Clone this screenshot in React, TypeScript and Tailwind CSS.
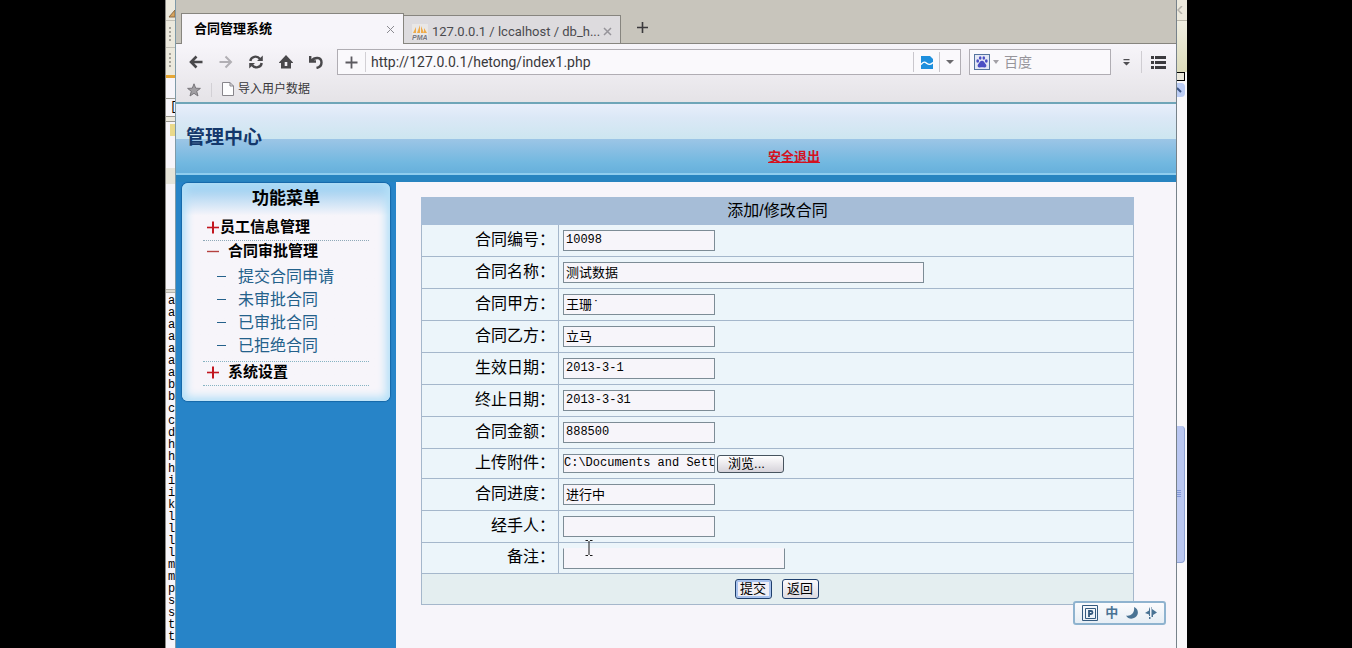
import { useState, type ReactNode } from 'react';

const letters = 'aaaaaaabbccdhhhiikllllmmpsstt'.split('');

interface Field {
  id: string;
  label: string;
  value: string;
  wide?: boolean;
}

const topFields: Field[] = [
  { id: 'number', label: '合同编号', value: '10098' },
  { id: 'name', label: '合同名称', value: '测试数据', wide: true },
  { id: 'partyA', label: '合同甲方', value: '王珊˙' },
  { id: 'partyB', label: '合同乙方', value: '立马' },
  { id: 'start', label: '生效日期', value: '2013-3-1' },
  { id: 'end', label: '终止日期', value: '2013-3-31' },
  { id: 'amount', label: '合同金额', value: '888500' },
];

const bottomFields: Field[] = [
  { id: 'progress', label: '合同进度', value: '进行中' },
  { id: 'handler', label: '经手人', value: '' },
];

const subMenu = ['提交合同申请', '未审批合同', '已审批合同', '已拒绝合同'];

const inputBase =
  "block h-[21px] border border-[#7d8c96] bg-[#f7f5fa] px-[2px] pb-[2px] font-['Liberation_Mono','Noto_Sans_CJK_SC',monospace] text-black outline-none";

function Row({ id, label, height, children }: { id: string; label: string; height: string; children: ReactNode }) {
  return (
    <tr className={height}>
      <th scope="row" className="border border-[#a5b7cb] p-0 pr-[3px] pb-[2px] text-right text-base leading-5 font-normal">
        <label htmlFor={id}>{label}：</label>
      </th>
      <td className="border border-[#a5b7cb] p-0 pl-1">{children}</td>
    </tr>
  );
}

function FieldRow({ field }: { field: Field }) {
  const [value, setValue] = useState(field.value);
  const size = /^[\d-]+$/.test(field.value) ? 'text-[12px]' : 'text-[13px]';
  return (
    <Row id={field.id} label={field.label} height="h-8">
      <input
        id={field.id}
        value={value}
        onChange={(e) => setValue(e.target.value)}
        className={`${inputBase} ${size} ${field.wide ? 'w-[361px]' : 'w-[152px]'}`}
      />
    </Row>
  );
}

function PlusMinus({ open }: { open?: boolean }) {
  return (
    <svg viewBox="0 0 13 13" className="h-[13px] w-[13px] shrink-0" stroke={open ? '#b5413f' : '#c2161f'} fill="none">
      <path d="M0 6.5H12" strokeWidth={open ? 1.4 : 1.6} />
      {!open && <path d="M6 0.5V12.5" strokeWidth="2" />}
    </svg>
  );
}

function ContractForm() {
  const [note, setNote] = useState('');
  return (
    <form className="relative" onSubmit={(e) => e.preventDefault()}>
      <table className="w-full table-fixed border-collapse bg-[#ecf5fa] text-black">
        <colgroup>
          <col className="w-[137px]" />
          <col />
        </colgroup>
        <thead>
          <tr className="h-[27px] bg-[#a6bdd7]">
            <th colSpan={2} className="border border-[#a6bdd7] p-0 text-base leading-5 font-normal">
              添加/修改合同
            </th>
          </tr>
        </thead>
        <tbody>
          {topFields.map((f) => (
            <FieldRow key={f.id} field={f} />
          ))}
          <Row id="file" label="上传附件" height="h-[30px]">
            <div className="flex items-center gap-[2px]">
              <input
                id="file"
                readOnly
                value="C:\Documents and Sett"
                className="block h-[19px] w-[152px] border border-[#7d8c96] bg-[#f7f5fa] pb-[2px] font-['Liberation_Mono',monospace] text-[12px] text-black outline-none"
              />
              <button
                type="button"
                className="h-[18px] w-[67px] rounded-[3px] border border-[#47545f] bg-linear-to-b from-white to-[#d6d3da] pr-2 text-[13px] leading-[13px]"
              >
                浏览...
              </button>
            </div>
          </Row>
          {bottomFields.map((f) => (
            <FieldRow key={f.id} field={f} />
          ))}
          <Row id="note" label="备注" height="h-[31px]">
            <input
              id="note"
              value={note}
              onChange={(e) => setNote(e.target.value)}
              className={`${inputBase} w-[222px] border-t-transparent text-[13px]`}
            />
          </Row>
          <tr className="h-[31px] bg-[#e4eef0]">
            <td colSpan={2} className="border border-[#a5b7cb] p-0 pr-[2px]">
              <div className="flex justify-center gap-[10px]">
                <button
                  type="submit"
                  className="h-5 w-[37px] rounded-[3px] border border-[#1f3f6d] bg-[#f1eff5] text-[13px] leading-4 inset-ring-2 inset-ring-[#a9c3ee]"
                >
                  提交
                </button>
                <button
                  type="button"
                  className="h-5 w-[37px] rounded-[3px] border border-[#1f3f6d] bg-linear-to-b from-[#fbfafc] to-[#dddbe2] text-[13px] leading-4"
                >
                  返回
                </button>
              </div>
            </td>
          </tr>
        </tbody>
      </table>
      {/* text cursor */}
      <svg viewBox="0 0 8 16" className="absolute top-[343px] left-[164px] h-4 w-2" fill="none" stroke="#1b1b1b">
        <path d="M0.5 0.5H3M5 0.5H7.5M4 1V15M0.5 15.5H3M5 15.5H7.5" />
      </svg>
    </form>
  );
}

function Sidebar() {
  return (
    <aside className="w-[220px] shrink-0 bg-[#2784c8] pt-px pl-[6px]">
      <nav className="w-[208px] rounded-md bg-linear-to-b from-[#8ec8ee] via-[#f7f5fa] via-15% to-[#f7f5fa] px-[21px] pb-[15px] shadow-[0_0_1px_1px_#1668a8] inset-shadow-[0_0_8px_4px_#b4e0f8]">
        <h2 className="h-8 text-center text-[17px] leading-8 font-bold">功能菜单</h2>
        <div className="flex h-[26px] items-center border-b border-dotted border-[#8fa9b8] pl-1 text-[15px] font-bold">
          <PlusMinus />
          员工信息管理
        </div>
        <div className="flex h-[21px] items-center gap-2 pl-1 text-[15px] font-bold">
          <PlusMinus open />
          合同审批管理
        </div>
        <ul className="border-b border-dotted border-[#86b3c2] pt-[3px] pb-1">
          {subMenu.map((item) => (
            <li key={item} className="flex h-[23px] items-center gap-3 pl-[14px] text-base text-[#24618b]">
              <span className="h-px w-[9px] bg-[#24618b]" />
              <a href="#">{item}</a>
            </li>
          ))}
        </ul>
        <div className="flex h-6 items-center gap-2 border-b border-dotted border-[#86b3c2] pb-[2px] pl-1 text-[15px] font-bold">
          <PlusMinus />
          系统设置
        </div>
      </nav>
    </aside>
  );
}

function TabBar() {
  return (
    <div className="flex h-11 items-end bg-[#c8c5bc]">
      <div className="h-full w-[5px] border-b border-[#87857f]" />
      <div className="flex h-[31px] w-[223px] items-center justify-between border border-b-0 border-[#87857f] bg-[#f7f5fa] pr-2 pl-3">
        <span className="text-[13px] font-bold text-black">合同管理系统</span>
        <button type="button" aria-label="关闭">
          <svg viewBox="0 0 9 9" className="h-[9px] w-[9px]" stroke="#8b8a90" fill="none">
            <path d="M1 1L8 8M8 1L1 8" />
          </svg>
        </button>
      </div>
      <div className="flex h-[29px] w-[217px] items-center border border-l-0 border-[#87857f] bg-[#dddbde] pt-1 pr-2 pl-2 text-[#4a4a4e]">
        <svg viewBox="0 0 16 16" className="mr-1 h-4 w-4 shrink-0">
          <rect width="16" height="16" fill="#e9e7e6" />
          <path d="M1 9L4 3V9ZM5 9L8 1V9ZM9 9L9 2L12 9ZM12 9L12 4L15 9Z" fill="#efab49" />
          <text x="0" y="16" fontSize="7" fontStyle="italic" fontWeight="bold" fill="#777681" fontFamily="Liberation Sans">
            PMA
          </text>
        </svg>
        <span className="flex-1 font-['Roboto',sans-serif] text-[13px] whitespace-nowrap">
          127.0.0.1 / lccalhost / db_h...
        </span>
        <button type="button" aria-label="关闭">
          <svg viewBox="0 0 9 9" className="h-[9px] w-[9px]" stroke="#96949a" strokeWidth="1.5" fill="none">
            <path d="M1 1L8 8M8 1L1 8" />
          </svg>
        </button>
      </div>
      <div className="flex h-full flex-1 items-center border-b border-[#87857f] pt-3 pl-4">
        <button type="button" aria-label="新建标签">
          <svg viewBox="0 0 11 11" className="h-[11px] w-[11px]" stroke="#3b3a3c" strokeWidth="1.6" fill="none">
            <path d="M5.5 0V11M0 5.5H11" />
          </svg>
        </button>
      </div>
    </div>
  );
}

function Toolbar() {
  return (
    <div className="flex h-9 items-center pr-[10px] pl-[13px]">
      <div className="flex w-[148px] items-center gap-4">
        <button type="button" aria-label="后退">
          <svg viewBox="0 0 14 14" className="h-[14px] w-[14px]" fill="none" stroke="#49484b" strokeWidth="2.6">
            <path d="M7.5 1.5L2 7L7.5 12.5M2 7H13.5" />
          </svg>
        </button>
        <button type="button" aria-label="前进">
          <svg viewBox="0 0 14 14" className="h-[14px] w-[14px]" fill="none" stroke="#b1afb4" strokeWidth="2">
            <path d="M6.5 1.5L12 7L6.5 12.5M12 7H0.5" />
          </svg>
        </button>
        <button type="button" aria-label="刷新">
          <svg viewBox="0 0 14 14" className="h-[14px] w-[14px]" fill="none" stroke="#49484b" strokeWidth="2.4">
            <path d="M1.3 6C2 1.5 8 0 11 4M12.7 8C12 12.5 6 14 3 10" />
            <path d="M13.8 0.5V6H8ZM0.2 13.5V8H6Z" fill="#49484b" stroke="none" />
          </svg>
        </button>
        <button type="button" aria-label="主页">
          <svg viewBox="0 0 14 14" className="h-[14px] w-[14px]" fill="#49484b">
            <path d="M7 0L14.5 8H12V13.5H2V8H-0.5L7 0ZM5.7 7V11H8.3V7Z" fillRule="evenodd" />
          </svg>
        </button>
        <button type="button" aria-label="恢复">
          <svg viewBox="0 0 14 14" className="h-[14px] w-[14px]" fill="none" stroke="#49484b" strokeWidth="2.4">
            <path d="M1.2 1V6.5H7M2 6C6 1.5 12.5 2 12.5 7.5C12.5 11 10 12.5 7.5 13" />
          </svg>
        </button>
      </div>
      <div className="flex h-[26px] flex-1 items-center border border-[#b0adb3] bg-[#faf9fc]">
        <svg viewBox="0 0 13 13" className="mx-[7px] h-[13px] w-[13px]" stroke="#5c5b60" strokeWidth="1.8">
          <path d="M6.5 0.5V12.5M0.5 6.5H12.5" />
        </svg>
        <input
          aria-label="地址"
          defaultValue="http://127.0.0.1/hetong/index1.php"
          className="h-5 min-w-0 flex-1 border-l border-[#d2d0d5] bg-transparent pl-[5px] font-['Roboto',sans-serif] text-[14px] text-[#39383b] outline-none"
        />
        <div className="flex h-5 w-[27px] items-center justify-center border-x border-[#c9c7cd]">
          <svg viewBox="0 0 12 13" className="h-[13px] w-3">
            <path d="M0 0H9L12 3V13H0Z" fill="#1d8fdd" />
            <path d="M0 8.5C3 5 4 6 6 7.5S9.5 9 12 6.5" stroke="#fff" strokeWidth="1.4" fill="none" />
          </svg>
        </div>
        <svg viewBox="0 0 8 4" className="mx-[6px] h-1 w-2" fill="#6b6a6e">
          <path d="M0 0H8L4 4Z" />
        </svg>
      </div>
      <div className="ml-2 flex h-[26px] w-[142px] items-center border border-[#b0adb3] bg-[#faf9fc] pl-1">
        <svg viewBox="0 0 16 16" className="h-4 w-4 shrink-0" fill="#4b4fc4">
          <rect x="0.5" y="0.5" width="15" height="15" fill="#e4e8f5" stroke="#54739e" />
          <ellipse cx="3.7" cy="7" rx="1.4" ry="1.8" />
          <ellipse cx="6.2" cy="4" rx="1.3" ry="1.8" />
          <ellipse cx="9.8" cy="4" rx="1.3" ry="1.8" />
          <ellipse cx="12.3" cy="7" rx="1.4" ry="1.8" />
          <path d="M8 6.8C10 6.8 10.5 9 12 10.5C13 12 12 13.8 10.2 13.5C8.5 13 7.5 13 5.8 13.5C4 13.8 3 12 4 10.5C5.5 9 6 6.8 8 6.8Z" />
        </svg>
        <svg viewBox="0 0 6 4" className="mx-[3px] h-1 w-[6px] shrink-0" fill="#a3a1a7">
          <path d="M0 0H6L3 4Z" />
        </svg>
        <input
          aria-label="搜索"
          placeholder="百度"
          className="min-w-0 flex-1 bg-transparent pl-[2px] text-[14px] outline-none placeholder:text-[#97959b]"
        />
      </div>
      <div className="flex h-[22px] w-[31px] items-center justify-center border-r border-[#cfcdd2]">
        <svg viewBox="0 0 7 7" className="h-[7px] w-[7px]" fill="#4f4e52">
          <path d="M0.5 0H6.5V1.2H0.5ZM0 3H7L3.5 6.5Z" />
        </svg>
      </div>
      <button type="button" aria-label="菜单" className="ml-[9px]">
        <svg viewBox="0 0 15 13" className="h-[13px] w-[15px]" fill="#3c3b3f">
          <path d="M0 0H3V3H0ZM4 0H15V3H4ZM0 5H3V8H0ZM4 5H15V8H4ZM0 10H3V13H0ZM4 10H15V13H4Z" />
        </svg>
      </button>
    </div>
  );
}

function Bookmarks() {
  return (
    <div className="flex h-[22px] items-start pl-[11px]">
      <svg viewBox="0 0 14 14" className="mt-[3px] h-[14px] w-[14px]" fill="#a19fa3" stroke="#77757a">
        <path d="M7 0.8L8.7 5.2L13.4 5.4L9.7 8.3L11 13L7 10.3L3 13L4.3 8.3L0.6 5.4L5.3 5.2Z" />
      </svg>
      <div className="mx-[10px] mt-[3px] h-[14px] w-px bg-[#d2d0d5]" />
      <a href="#" className="flex items-center gap-1 text-[12px] leading-[18px] text-[#39383b]">
        <svg viewBox="0 0 12 14" className="h-[14px] w-3" fill="#fdfdfe" stroke="#87858b">
          <path d="M0.5 0.5H8L11.5 4V13.5H0.5ZM8 0.5V4H11.5" />
        </svg>
        导入用户数据
      </a>
    </div>
  );
}

function ImeBar() {
  return (
    <div className="absolute right-[10px] bottom-[23px] flex h-6 w-[93px] items-center justify-between rounded-[3px] border-2 border-[#8fb3cf] bg-linear-to-b from-[#fbfbfd] to-[#e7eef5] px-[7px] text-[#4a7394]">
      <svg viewBox="0 0 16 16" className="h-4 w-4" fill="none" stroke="#355a7e">
        <path d="M0.5 0.5H15.5V15.5H0.5ZM3.5 3.5H13.5V13.5H3.5Z" />
        <path d="M7 12V6H9Q10.5 6 10.5 7.5T9 9H7" strokeWidth="1.8" />
      </svg>
      <span className="text-[13px] leading-4 font-bold">中</span>
      <svg viewBox="0 0 12 12" className="h-3 w-3" fill="#4a7394">
        <path d="M8 0C13 2 13 8 9 10.5C6 12.5 2 12 0 8.5C5 9.5 9 6 8 0Z" />
      </svg>
      <svg viewBox="0 0 12 12" className="h-3 w-3" fill="#4a7394">
        <path d="M5 0V9H4V7.5L0 6L4 3.5V2ZM7 0V2L12 5.5L8 8V10H6.5V0ZM4 10H5.5V12H4Z" />
      </svg>
    </div>
  );
}

function LeftStrip() {
  return (
    <div className="flex w-[11px] shrink-0 flex-col overflow-hidden border-r border-l border-r-[#7f9aa8] border-l-[#8b8a86] bg-[#f7f5fa]">
      <div className="h-[75px] bg-[#ece9dd] pt-[10px]">
        <svg viewBox="0 0 10 62" className="h-[62px] w-[10px]">
          <path d="M3 7L9 0V7Z" fill="#d8a45c" stroke="#8b6b45" />
          <path d="M0 10.5H10M0 37.5H10" stroke="#c3c0b6" />
          <path d="M4 17V32M4 43V58" stroke="#a7a49b" strokeWidth="2" strokeDasharray="2 2" />
        </svg>
      </div>
      <div className="h-[3px] bg-[#e6a735]" />
      <div className="h-[20px]" />
      <div className="h-[19px] border-y border-[#9a988f] pl-1 font-['Liberation_Mono',monospace] text-[12px] leading-4">[</div>
      <div className="h-[5px] border-b border-[#9a988f] bg-[#ece9dd]" />
      <div className="mt-[2px] ml-1 h-3 bg-[#e9d98a]" />
      <div className="mt-8 h-4 bg-[#e6e4d9]" />
      <div className="mt-[105px] h-1 border-y border-[#b5b3ac] bg-[#dddad2]" />
      <div className="mt-[2px] pl-[2px] font-['Liberation_Mono',monospace] text-[12px] leading-3 text-black">
        {letters.map((l, i) => (
          <div key={i}>{l}</div>
        ))}
      </div>
    </div>
  );
}

function RightStrip() {
  return (
    <div className="flex w-[10px] shrink-0 flex-col bg-[#f9f8fa]">
      <div className="flex h-[21px] items-center border-b border-[#b9b6a9] bg-[#ece9dd]">
        <svg viewBox="0 0 6 8" className="h-2 w-[6px]" fill="none" stroke="#b5b2ab" strokeWidth="1.5">
          <path d="M5 0L1 4L5 8" />
        </svg>
      </div>
      <div className="h-[51px] bg-linear-to-b from-[#f0eee2] to-[#dddcbb]" />
      <div className="mr-[2px] h-[9px] border border-l-0 border-black bg-[#ece9dd]" />
      <div className="mt-[2px] mr-[2px] flex h-[14px] items-center rounded-r-sm bg-[#bccdf5]">
        <svg viewBox="0 0 5 6" className="h-[6px] w-[5px]" fill="none" stroke="#3d5687" strokeWidth="2">
          <path d="M0 1L4 5" />
        </svg>
      </div>
      <div className="mt-[329px] mr-[2px] flex h-[137px] items-center rounded-r-sm border-r border-b border-[#8fa3d4] bg-[#bac7f1]">
        <svg viewBox="0 0 4 8" className="h-2 w-1" stroke="#8498d8">
          <path d="M0 0.5H4M0 2.5H4M0 4.5H4M0 6.5H4" />
        </svg>
      </div>
    </div>
  );
}

export default function App() {
  return (
    <div className="flex h-screen overflow-hidden bg-black px-[165px] font-['Liberation_Sans','Noto_Sans_CJK_SC',sans-serif]">
      <LeftStrip />
      <div className="relative flex min-w-0 flex-1 flex-col border-r border-[#77828a] bg-[#f7f5fa]">
        <TabBar />
        <div className="bg-linear-to-b from-[#f7f5fa] to-[#e5e3e7]">
          <Toolbar />
          <Bookmarks />
        </div>
        <header className="flex h-20 flex-col border-t-2 border-b-7 border-[#2784c0] border-t-[#6fa5b8]">
          <div className="relative flex h-[71px] items-center border-b-2 border-[#8fcdee] bg-[linear-gradient(180deg,#e8eefb_0%,#dbe8f6_20%,#cde6f0_50%,#9cc5e6_51%,#72b8e0_85%,#67b0dc_100%)] pl-[10px]">
            <h1 className="text-[19px] font-bold text-[#14386b]">管理中心</h1>
            <a href="#" className="mt-9 ml-[506px] text-[13px] font-bold text-[#d3121f] underline">
              安全退出
            </a>
          </div>
        </header>
        <div className="flex min-h-0 flex-1">
          <Sidebar />
          <main className="flex-1 pt-[15px] pr-[42px] pl-[25px]">
            <ContractForm />
          </main>
        </div>
        <ImeBar />
      </div>
      <RightStrip />
    </div>
  );
}
